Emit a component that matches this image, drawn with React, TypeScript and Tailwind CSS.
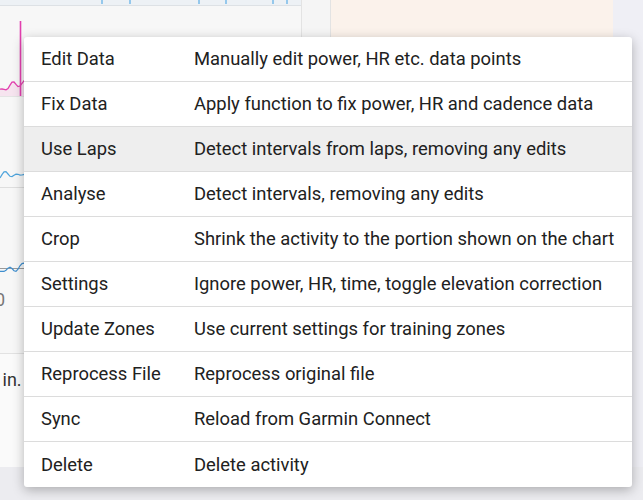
import type { ReactNode } from "react";

const menuItems = [
  { label: "Edit Data", description: "Manually edit power, HR etc. data points" },
  { label: "Fix Data", description: "Apply function to fix power, HR and cadence data" },
  { label: "Use Laps", description: "Detect intervals from laps, removing any edits", active: true },
  { label: "Analyse", description: "Detect intervals, removing any edits" },
  { label: "Crop", description: "Shrink the activity to the portion shown on the chart" },
  { label: "Settings", description: "Ignore power, HR, time, toggle elevation correction" },
  { label: "Update Zones", description: "Use current settings for training zones" },
  { label: "Reprocess File", description: "Reprocess original file" },
  { label: "Sync", description: "Reload from Garmin Connect" },
  { label: "Delete", description: "Delete activity" },
];

// simple deterministic wobble for the chart traces
function trace(width: number, base: number, amp: number, seed: number) {
  const pts: string[] = [];
  for (let x = 0; x <= width; x += 2) {
    const y =
      base +
      Math.sin((x + seed) / 3.1) * amp * 0.5 +
      Math.sin((x + seed * 2) / 7.3) * amp * 0.7 +
      Math.cos((x + seed) / 1.7) * amp * 0.3;
    pts.push(`${x},${y.toFixed(1)}`);
  }
  return pts.join(" ");
}

function ChartRow({ height, children }: { height: number; children: ReactNode }) {
  return (
    <svg width={301} height={height} className="block shrink-0">
      {children}
    </svg>
  );
}

function ActivityCharts() {
  return (
    <div className="flex w-[301px] flex-col bg-[#f7f7f7]">
      {/* elevation strip */}
      <div className="h-[6px] border-b border-[#dde1e5] bg-[#edf1f5]">
        <svg width={301} height={5} className="block">
          {[102, 130, 199, 226, 273, 287].map((x) => (
            <line key={x} x1={x} y1={0} x2={x} y2={4} stroke="#5aaee6" strokeWidth={1.2} />
          ))}
        </svg>
      </div>

      {/* power */}
      <ChartRow height={91}>
        <polygon points={`0,91 ${trace(301, 78, 6, 3)} 301,91`} fill="#f6e4ef" />
        <polyline points={trace(301, 78, 6, 3)} fill="none" stroke="#e23fae" strokeWidth={1.3} />
        <line x1={20.5} y1={15} x2={20.5} y2={90} stroke="#e23fae" strokeWidth={1.6} />
        <line x1={0} y1={90.5} x2={301} y2={90.5} stroke="#e4e4e4" />
      </ChartRow>

      {/* heart rate */}
      <ChartRow height={91}>
        <polyline points={trace(301, 80, 5, 11)} fill="none" stroke="#4ea4dc" strokeWidth={1.2} />
        <line x1={0} y1={90.5} x2={301} y2={90.5} stroke="#dedede" />
      </ChartRow>

      {/* cadence */}
      <ChartRow height={86}>
        <line x1={0} y1={80.5} x2={301} y2={80.5} stroke="#9a9a9a" />
        <polyline points={trace(301, 80, 5, 27)} fill="none" stroke="#3f8fcf" strokeWidth={1.2} />
      </ChartRow>

      <div className="flex h-[80px] items-start border-b border-[#e2e2e2]">
        <span className="-ml-[5px] mt-[12px] text-[18px] text-[#777]">0</span>
      </div>

      <div className="h-[113px] bg-[#fafafa] pt-[12px]">
        <p className="-ml-[25px] whitespace-nowrap text-[18px] text-[#333]">Fill in.</p>
      </div>
    </div>
  );
}

function ActionsMenu() {
  return (
    <div className="absolute left-[24px] top-[37px] w-[608px] overflow-hidden rounded-[3px] bg-white shadow-[0_3px_12px_rgba(0,0,0,0.28)]">
      {menuItems.map((item, i) => (
        <div
          key={item.label}
          className={`grid h-[45px] grid-cols-[153px_1fr] items-center whitespace-nowrap pl-[17px] text-[18.4px] text-[#212121] ${
            i < menuItems.length - 1 ? "border-b border-[#dcdcdc]" : ""
          } ${item.active ? "bg-[#eeeeee]" : ""}`}
        >
          <span>{item.label}</span>
          <span>{item.description}</span>
        </div>
      ))}
    </div>
  );
}

export default function App() {
  return (
    <div className="relative h-[500px] w-[643px] overflow-hidden bg-[#ececf0] font-['Roboto',sans-serif]">
      <div className="flex h-[467px]">
        <ActivityCharts />
        <div className="w-[30px] border-x border-[#e3e3e3] bg-[#f5f5f5]" />
        <div className="w-[282px] bg-[#fbf2eb]" />
        <div className="flex-1 bg-[#efeff5]" />
      </div>
      <ActionsMenu />
    </div>
  );
}
